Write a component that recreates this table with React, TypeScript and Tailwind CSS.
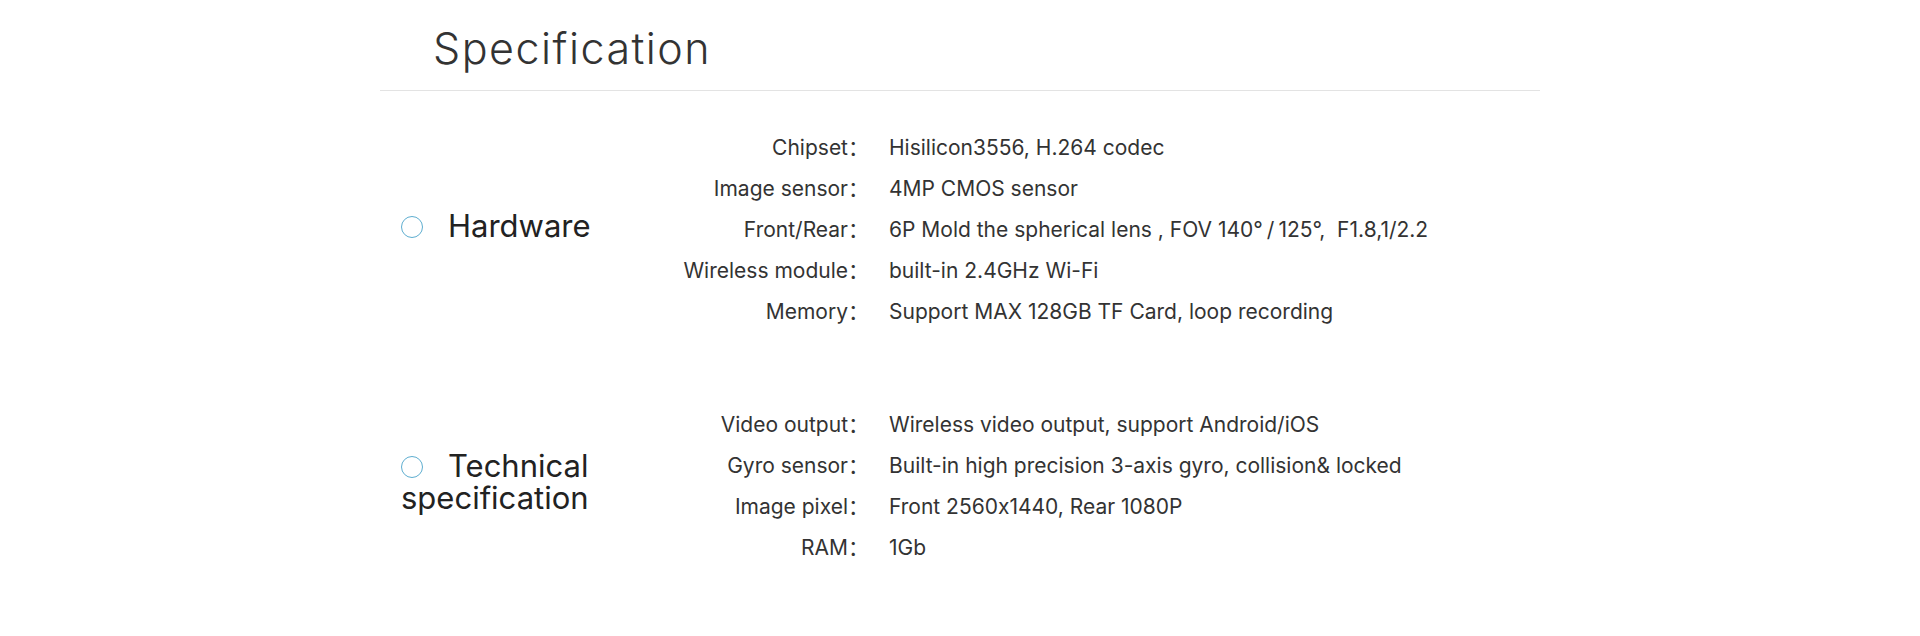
import React from 'react';

type Row = { label: string; value: React.ReactNode };

const hardware: Row[] = [
  { label: 'Chipset', value: 'Hisilicon3556, H.264 codec' },
  { label: 'Image sensor', value: '4MP CMOS sensor' },
  {
    label: 'Front/Rear',
    value: (
      <>
        6P Mold the spherical lens , FOV 140°<span className="px-[4px]">/</span>125°,  F1.8,1/2.2
      </>
    ),
  },
  { label: 'Wireless module', value: 'built-in 2.4GHz Wi-Fi' },
  { label: 'Memory', value: 'Support MAX 128GB TF Card, loop recording' },
];

const technical: Row[] = [
  { label: 'Video output', value: 'Wireless video output, support Android/iOS' },
  { label: 'Gyro sensor', value: 'Built-in high precision 3-axis gyro, collision& locked' },
  { label: 'Image pixel', value: 'Front 2560x1440, Rear 1080P' },
  { label: 'RAM', value: '1Gb' },
];

const SpecSection: React.FC<{ title: string; rows: Row[]; className?: string }> = ({ title, rows, className }) => (
  <div className={`flex items-center ${className ?? ''}`}>
    {/* section name with the small ring bullet */}
    <div className="w-[220px] shrink-0 pl-[21px] pb-[8px] text-[31px] leading-[32px] text-[#222]">
      <span className="inline-block w-[22px] h-[22px] rounded-full border-[1.5px] border-[#5eaed0] mr-[25px] align-[-1px]" />
      {title}
    </div>
    <div className="flex flex-col">
      {rows.map((r) => (
        <div key={r.label} className="flex text-[21px] leading-[41px] text-[#333]">
          <div className="w-[260px] shrink-0 text-right">
            {r.label}
            <span className="inline-block w-[12px] text-left">：</span>
          </div>
          <div className="pl-[29px] whitespace-pre">{r.value}</div>
        </div>
      ))}
    </div>
  </div>
);

export default function App() {
  return (
    <div
      className="w-full h-[636px] bg-white [font-feature-settings:'calt'_0]"
      style={{ fontFamily: 'Inter, "Noto Sans CJK SC", sans-serif' }}
    >
      <div className="w-[1160px] mx-auto">
        <div className="pt-[27px] pb-[21px] pl-[53px] border-b border-[#e3e3e3] text-[43px] leading-[42px] tracking-[1.5px] font-light text-[#333]">
          Specification
        </div>
        <SpecSection title="Hardware" rows={hardware} className="mt-[36px]" />
        <SpecSection title="Technical specification" rows={technical} className="mt-[72px]" />
      </div>
    </div>
  );
}
